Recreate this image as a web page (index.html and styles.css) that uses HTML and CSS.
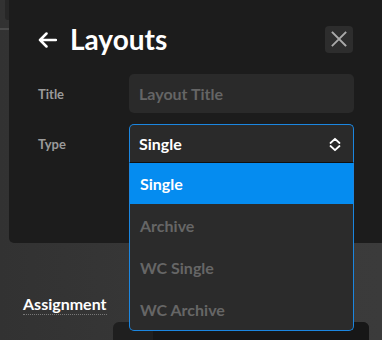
FILE: index.html
```html
<!DOCTYPE html>
<html lang="en">
<head>
    <meta charset="UTF-8">
    <title>Layouts</title>
    <link rel="stylesheet" href="styles.css">
</head>
<body>
    <div class="page">
        <div class="rail">
            <div class="rail-tab"></div>
        </div>
        <div class="assign">
            <span class="assign-label">Assignment</span>
        </div>
        <div class="assign-box">
            <div class="assign-box-inner"></div>
        </div>
    </div>

    <div class="modal">
        <div class="modal-head">
            <h1 class="modal-title">
                <svg class="back" width="19" height="16" viewBox="0 0 19 16">
                    <path d="M18 8H2M8.5 1.5L2 8l6.5 6.5" fill="none" stroke="#fff" stroke-width="2.5" stroke-linecap="round" stroke-linejoin="round"/>
                </svg>
                Layouts
            </h1>
            <button class="close" type="button">
                <svg width="16" height="16" viewBox="0 0 16 16">
                    <path d="M1.5 1.5l13 13M14.5 1.5l-13 13" stroke="#aaa" stroke-width="1.8" stroke-linecap="square"/>
                </svg>
            </button>
        </div>

        <form class="form">
            <label class="label" for="title">Title</label>
            <input class="input" id="title" type="text" placeholder="Layout Title">

            <label class="label">Type</label>
            <div class="select">
                <span class="select-value">Single</span>
                <svg class="chevrons" width="12" height="15" viewBox="0 0 12 15">
                    <path d="M1.5 6L6 1.8 10.5 6M1.5 9L6 13.2 10.5 9" fill="none" stroke="#fff" stroke-width="1.8" stroke-linecap="round" stroke-linejoin="round"/>
                </svg>
                <ul class="menu">
                    <li class="option active">Single</li>
                    <li class="option">Archive</li>
                    <li class="option">WC Single</li>
                    <li class="option">WC Archive</li>
                </ul>
            </div>
        </form>
    </div>
</body>
</html>
```

FILE: styles.css
```css
body {
    margin: 0;
    width: 382px;
    height: 340px;
    overflow: hidden;
    position: relative;
    font-family: Lato, "Open Sans", sans-serif;
    background: linear-gradient(90deg, #323232 0%, #393939 60%, #3b3b3b 100%);
    color: #fff;
}
.page {
    height: 340px;
}
.rail {
    width: 9px;
    height: 28px;
    border-bottom: 2px solid #4a4a4a;
    position: relative;
}
.rail-tab {
    position: absolute;
    right: 0;
    top: 0;
    width: 4px;
    height: 20px;
    background-color: #272727;
    border-radius: 0 0 0 3px;
}
.assign {
    margin-top: 264px;
    padding-left: 23px;
    height: 28px;
}
.assign-label {
    font-size: 16px;
    font-weight: 700;
    color: #fff;
    border-bottom: 1px dotted #777;
    padding-bottom: 1px;
}
.assign-box {
    margin-left: 113px;
    width: 256px;
    height: 20px;
    background-color: #1f1f1f;
    border-radius: 6px 6px 0 0;
    display: flex;
    justify-content: flex-end;
}
.assign-box-inner {
    width: 216px;
    background-color: #171717;
    border-radius: 0 6px 0 0;
}
.modal {
    position: absolute;
    left: 9px;
    top: 0;
    width: 383px;
    height: 243px;
    box-sizing: border-box;
    padding: 25px 39px 0 29px;
    background-color: #1c1c1c;
    border-radius: 0 0 0 5px;
}
.modal-head {
    display: flex;
    align-items: center;
    justify-content: space-between;
    height: 28px;
}
.modal-title {
    margin: 0;
    display: flex;
    align-items: center;
    gap: 13px;
    font-size: 28px;
    font-weight: 700;
    line-height: 28px;
    color: #fff;
}
.back {
    margin-top: 2px;
}
.close {
    width: 28px;
    height: 27px;
    padding: 0;
    border: none;
    border-radius: 4px;
    background-color: #2d2d2d;
    display: flex;
    align-items: center;
    justify-content: center;
}
.form {
    margin-top: 21px;
    display: grid;
    grid-template-columns: 91px 225px;
    grid-auto-rows: 39px;
    row-gap: 11px;
    align-items: center;
}
.label {
    font-size: 13px;
    font-weight: 700;
    color: #9a9a9a;
}
.input {
    height: 39px;
    box-sizing: border-box;
    border: none;
    border-radius: 5px;
    background-color: #2a2a2a;
    padding: 0 10px;
    font-family: inherit;
    font-size: 16px;
    font-weight: 700;
    color: #fff;
    outline: none;
}
.input::placeholder {
    color: #656565;
}
.select {
    position: relative;
    height: 39px;
    box-sizing: border-box;
    border: 1px solid #1b86e0;
    border-bottom: 1px solid #101010;
    border-radius: 5px 5px 0 0;
    background-color: #2a2a2a;
    display: flex;
    align-items: center;
    justify-content: space-between;
    padding: 0 12px 0 9px;
}
.select-value {
    font-size: 16px;
    font-weight: 700;
    color: #fff;
}
.chevrons {
    margin-top: 1px;
}
.menu {
    position: absolute;
    top: 100%;
    left: -1px;
    right: -1px;
    margin: 1px 0 0;
    padding: 0;
    list-style: none;
    border: 1px solid #1b86e0;
    border-top: none;
    border-radius: 0 0 5px 5px;
    background-color: #2b2b2b;
}
.option {
    height: 42px;
    display: flex;
    align-items: center;
    padding-left: 10px;
    font-size: 16px;
    font-weight: 700;
    color: #666;
}
.option.active {
    height: 41px;
    background-color: #058cf0;
    color: #fff;
}
```
